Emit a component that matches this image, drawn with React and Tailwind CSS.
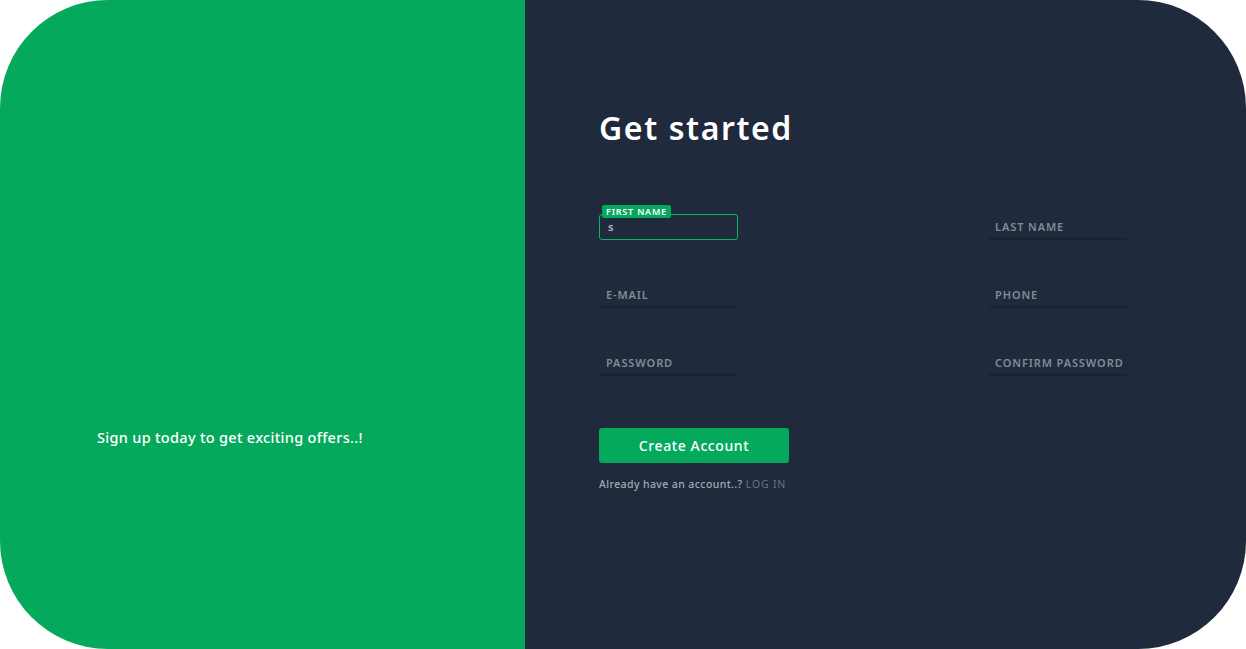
import React, { useState } from "react";

const fields = [
  { name: "firstName", label: "FIRST NAME", value: "s", focused: true },
  { name: "lastName", label: "LAST NAME" },
  { name: "email", label: "E-MAIL" },
  { name: "phone", label: "PHONE" },
  { name: "password", label: "PASSWORD" },
  { name: "confirm", label: "CONFIRM PASSWORD" },
];

const Field = ({ label, value, focused }) => {
  if (focused) {
    return (
      <div className="relative h-[26px] w-[139px]">
        <span className="absolute left-[3px] top-[-9px] rounded-[2px] bg-[#05a95c] px-[4px] text-[9px] font-semibold leading-[13px] tracking-[0.8px] text-white">
          {label}
        </span>
        <div className="flex h-full items-center rounded-[3px] border border-[#0fb563] pl-[8px] text-[11px] font-semibold text-[#b8bec8]">
          {value}
        </div>
      </div>
    );
  }
  return (
    <div className="flex h-[26px] w-[139px] items-center rounded-[3px] border-b-2 border-[#1a2333] pl-[7px] pt-[2px] text-[11px] font-semibold tracking-[0.9px] text-[#838b97]">
      {label}
    </div>
  );
};

export default function App() {
  const [agree] = useState(true);
  return (
    <div
      className="h-[649px] w-[1246px] bg-white"
      style={{ fontFamily: '"Noto Sans", "Open Sans", sans-serif' }}
    >
      <div className="flex h-full w-full overflow-hidden rounded-[108px]">
        {/* Left promo */}
        <div className="flex w-[525px] flex-col bg-[#05a95c] pl-[97px] pt-[427px]">
          <p className="text-[14.5px] font-medium tracking-[0.3px] text-white">
            Sign up today to get exciting offers..!
          </p>
        </div>

        {/* Right form */}
        <div className="flex flex-1 flex-col bg-[#1f2a3c] pl-[74px] pt-[104px]">
          <h1 className="text-[32px] font-semibold leading-[48px] tracking-[1.6px] text-white">
            Get started
          </h1>

          <div className="mt-[62px] grid grid-cols-[139px_139px] gap-x-[250px] gap-y-[42px]">
            {fields.map((f) => (
              <Field key={f.name} {...f} />
            ))}
          </div>

          <button className="mt-[52px] h-[35px] w-[190px] rounded-[3px] bg-[#05a95c] text-[14px] font-medium tracking-[0.6px] text-white">
            Create Account
          </button>

          {agree && (
            <p className="mt-[14px] text-[10.5px] font-medium tracking-[0.4px] text-[#a3a9b3]">
              Already have an account..?{" "}
              <span className="font-normal tracking-[0.8px] text-[#6b7380]">LOG IN</span>
            </p>
          )}
        </div>
      </div>
    </div>
  );
}
